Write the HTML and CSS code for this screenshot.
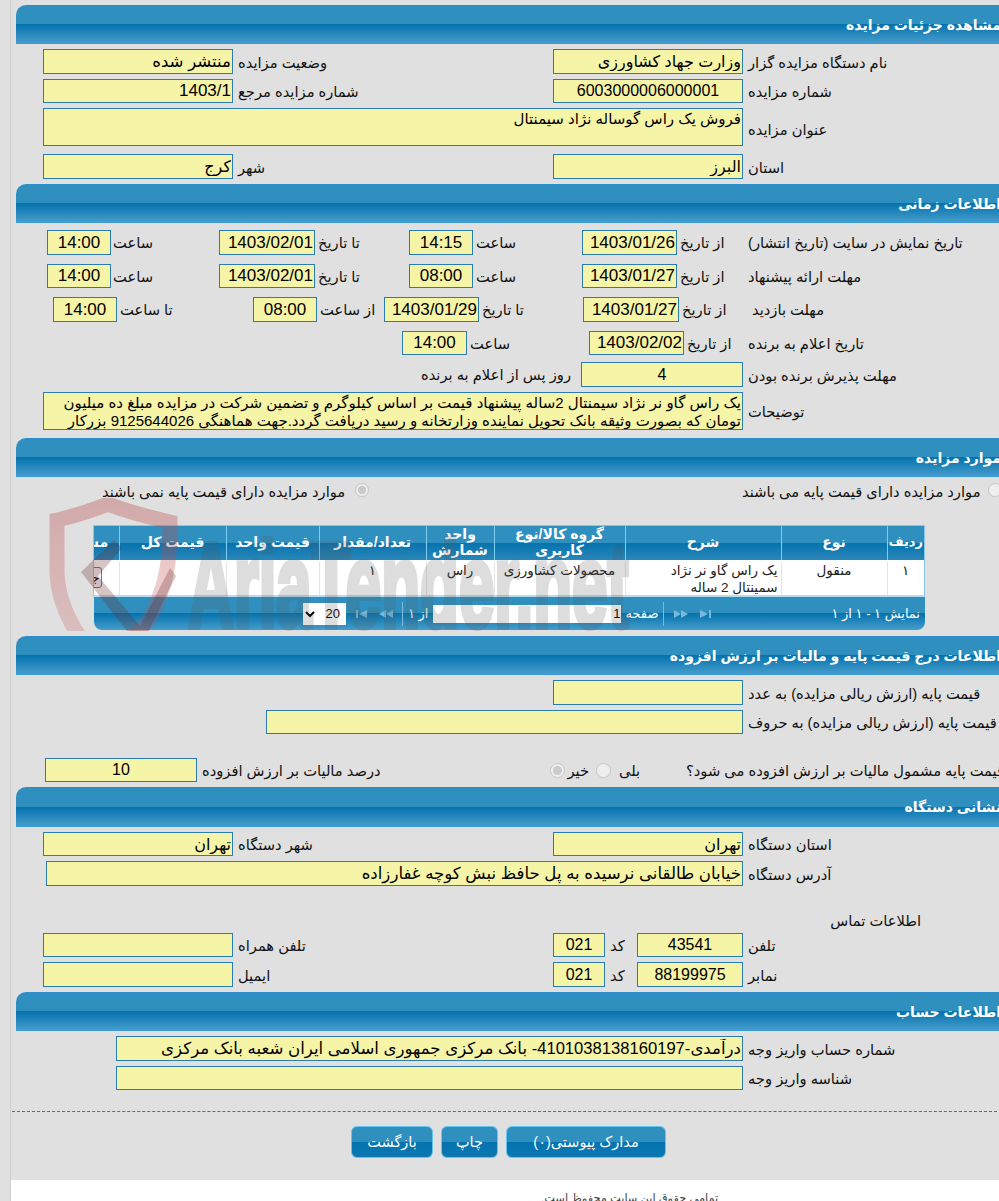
FILE: index.html
```html
<!DOCTYPE html>
<html lang="fa">
<head>
<meta charset="utf-8">
<title>مشاهده جزئیات مزایده</title>
<link rel="stylesheet" href="styles.css">
</head>
<body>
<main class="page">

<section class="section first">
  <h2 class="bar">مشاهده جزئیات مزایده</h2>
  <div class="row p27 mt5"><input class="f fa w190" readonly value="منتشر شده"><span class="l w315">وضعیت مزایده</span><input class="f w190" readonly value="وزارت جهاد کشاورزی"><span class="l">نام دستگاه مزایده گزار</span></div>
  <div class="row h24 p27 mt5"><input class="f d w190" readonly value="1403/1"><span class="l w315">شماره مزایده مرجع</span><input class="f w190 c" readonly value="6003000006000001"><span class="l">شماره مزایده</span></div>
  <div class="row h38 p27 mt5"><textarea class="f ta w700" readonly>فروش یک راس گوساله نژاد سیمنتال</textarea><span class="l low">عنوان مزایده</span></div>
  <div class="row p27 mt8"><input class="f w190" readonly value="کرج"><span class="l w315">شهر</span><input class="f w190" readonly value="البرز"><span class="l">استان</span></div>
</section>

<section class="section">
  <h2 class="bar">اطلاعات زمانی</h2>
  <div class="row p31 mt7"><input class="f d w64 c" readonly value="14:00"><span class="l2 w106">ساعت</span><input class="f d w96" readonly value="1403/02/01"><span class="l3 w91">تا تاریخ</span><input class="f d w64 c" readonly value="14:15"><span class="l3 w106">ساعت</span><input class="f d w95" readonly value="1403/01/26"><span class="l3 w68">از تاریخ</span><span class="l0">تاریخ نمایش در سایت (تاریخ انتشار)</span></div>
  <div class="row h24 p31 mt9"><input class="f d w64 c" readonly value="14:00"><span class="l2 w106">ساعت</span><input class="f d w96" readonly value="1403/02/01"><span class="l3 w91">تا تاریخ</span><input class="f d w64 c" readonly value="08:00"><span class="l3 w106">ساعت</span><input class="f d w95" readonly value="1403/01/27"><span class="l3 w68">از تاریخ</span><span class="l0">مهلت ارائه پیشنهاد</span></div>
  <div class="row p37 mt9"><input class="f d w64 c" readonly value="14:00"><span class="l3 w133">تا ساعت</span><input class="f d w64 c" readonly value="08:00"><span class="l3 w64">از ساعت</span><input class="f d w95" readonly value="1403/01/29"><span class="l3 w101">تا تاریخ</span><input class="f d w96" readonly value="1403/01/27"><span class="l3 w70">از تاریخ</span><span class="l0">مهلت بازدید</span></div>
  <div class="row h24 p386 mt9"><input class="f d w65 c" readonly value="14:00"><span class="l3 w119">ساعت</span><input class="f d w95" readonly value="1403/02/02"><span class="l3 w61">از تاریخ</span><span class="l0">تاریخ اعلام به برنده</span></div>
  <div class="row p408 mt7"><span class="tail">روز پس از اعلام به برنده</span><input class="f w162 c" readonly value="4"><span class="l">مهلت پذیرش برنده بودن</span></div>
  <div class="row h38 p27 mt5 mb3"><textarea class="f ta w700" readonly>یک راس گاو نر نژاد سیمنتال 2ساله پیشنهاد قیمت بر اساس کیلوگرم و تضمین شرکت در مزایده مبلغ ده میلیون
تومان که بصورت وثیقه بانک تحویل نماینده وزارتخانه و رسید دریافت گردد.جهت هماهنگی 9125644026 بزرکار</textarea><span class="l">توضیحات</span></div>
</section>

<section class="section s3">
  <h2 class="bar">موارد مزایده</h2>
  <div class="radios">
    <span class="rt w249">موارد مزایده دارای قیمت پایه نمی باشند</span><input class="radio ml4" type="radio" name="base" disabled checked>
    <span class="rt w242 ml373">موارد مزایده دارای قیمت پایه می باشند</span><input class="radio ml4" type="radio" name="base" disabled>
  </div>
  <div class="grid">
    <div class="grid-clip">
      <table class="tbl">
        <colgroup><col class="c37"><col class="c106"><col class="c156"><col class="c131"><col class="c68"><col class="c107"><col class="c93"><col class="c107"><col class="c76"></colgroup>
        <thead><tr><th class="th-s">ردیف</th><th>نوع</th><th>شرح</th><th>گروه کالا/نوع کاربری</th><th>واحد شمارش</th><th>تعداد/مقدار</th><th>قیمت واحد</th><th>قیمت کل</th><th>مشاهده</th></tr></thead>
        <tbody><tr><td class="tc">۱</td><td class="tc">منقول</td><td>یک راس گاو نر نژاد سمینتال 2 ساله</td><td class="tc">محصولات کشاورزی</td><td class="tc">راس</td><td class="tc">۱</td><td></td><td></td><td><button class="mini" type="button">جزئیات</button></td></tr></tbody>
      </table>
    </div>
    <div class="pager">
      <select class="pg-size" dir="rtl"><option>20</option></select>
      <svg class="pg-ico ml9" viewBox="0 0 14 12" width="14" height="12"><path d="M1 2h2v8H1zM12 2v8L4 6z"/></svg>
      <svg class="pg-ico ml9" viewBox="0 0 16 12" width="16" height="12"><path d="M8 2v8L1 6zM15 2v8L8 6z"/></svg>
      <span class="pg-sep ml8"></span>
      <span class="pg-t ml5">از ۱</span>
      <input class="pg-in" readonly value="1">
      <span class="pg-t ml5">صفحه</span>
      <span class="pg-sep ml5"></span>
      <svg class="pg-ico ml9" viewBox="0 0 16 12" width="16" height="12"><path d="M1 2v8l7-4zM8 2v8l7-4z"/></svg>
      <svg class="pg-ico ml9" viewBox="0 0 14 12" width="14" height="12"><path d="M2 2v8l8-4zM11 2h2v8h-2z"/></svg>
      <span class="pg-info">نمایش ۱ - ۱ از ۱</span>
    </div>
  </div>
  <div class="mark" aria-hidden="true">
    <svg class="mark-s" viewBox="0 0 135 150" width="135" height="150">
      <defs><linearGradient id="shade" x1="0" y1="0" x2="0" y2="1"><stop offset="0" stop-color="#b84a4a" stop-opacity=".36"/><stop offset="1" stop-color="#c85050" stop-opacity=".2"/></linearGradient></defs>
      <path d="M9 22 C35 16 50 10 60 6 C80 14 105 20 122 24 C122 60 120 85 102 120 C90 136 75 150 55 170 C30 140 10 110 9 75 Z" fill="none" stroke="url(#shade)" stroke-width="15"/>
      <path d="M33 74 L66 42 L74 50 L50 78 L92 128 L122 70 L128 78 L92 150 Z" fill="#6b2a2a" fill-opacity=".28"/>
    </svg>
    <span class="mark-t">AriaTender.net</span>
  </div>
</section>

<section class="section">
  <h2 class="bar">اطلاعات درج قیمت پایه و مالیات بر ارزش افزوده</h2>
  <div class="row p537 mt5"><input class="f w190" readonly><span class="l">قیمت پایه (ارزش ریالی مزایده) به عدد</span></div>
  <div class="row h24 p250 mt5"><input class="f w477" readonly><span class="l">قیمت پایه (ارزش ریالی مزایده) به حروف</span></div>
  <div class="row h24 p29 mt24"><input class="f w152 c" readonly value="10"><span class="l w348">درصد مالیات بر ارزش افزوده</span><input class="radio big" type="radio" name="tax" disabled checked><span class="rt ml7 w17">خیر</span><input class="radio big ml7" type="radio" name="tax" disabled><span class="rt ml8 w67">بلی</span><span class="rt">قیمت پایه مشمول مالیات بر ارزش افزوده می شود؟</span></div>
</section>

<section class="section">
  <h2 class="bar tall">نشانی دستگاه</h2>
  <div class="row h24 p27 mt5"><input class="f w190" readonly value="تهران"><span class="l w315">شهر دستگاه</span><input class="f w190" readonly value="تهران"><span class="l">استان دستگاه</span></div>
  <div class="row p30 mt5"><input class="f fa w697" readonly value="خیابان طالقانی نرسیده به پل حافظ نبش کوچه غفارزاده"><span class="l">آدرس دستگاه</span></div>
  <p class="contact">اطلاعات تماس</p>
  <div class="row h24 p27 mt3"><input class="f w190" readonly><span class="l w315">تلفن همراه</span><input class="f w52 c" readonly value="021"><span class="l w27">کد</span><input class="f w106 c" readonly value="43541"><span class="l">تلفن</span></div>
  <div class="row p27 mt5"><input class="f w190" readonly><span class="l w315">ایمیل</span><input class="f w52 c" readonly value="021"><span class="l w27">کد</span><input class="f w106 c" readonly value="88199975"><span class="l">نمابر</span></div>
</section>

<section class="section">
  <h2 class="bar">اطلاعات حساب</h2>
  <div class="row p100 mt5"><input class="f fa w627" readonly value="درآمدی-4101038138160197- بانک مرکزی جمهوری اسلامی ایران شعبه بانک مرکزی"><span class="l">شماره حساب واریز وجه</span></div>
  <div class="row h24 p100 mt5"><input class="f w627" readonly><span class="l">شناسه واریز وجه</span></div>
</section>

<hr class="dash">
<div class="actions">
  <button class="btn w82" type="button">بازگشت</button>
  <button class="btn w57" type="button">چاپ</button>
  <button class="btn w160" type="button">مدارک پیوستی(۰)</button>
</div>
<footer class="foot">تمامی حقوق این سایت محفوظ است.</footer>
</main>
</body>
</html>
```

FILE: styles.css
```css
html { overflow: hidden; background: #e0e0e0; }
body { margin: 0; background: #e0e0e0; font-family: "Liberation Sans", "DejaVu Sans", sans-serif; font-size: 14.7px; color: #111; }
.page { margin-left: 10px; border-left: 1px solid #cdcdcd; width: 1100px; height: 1201px; overflow: hidden; display: flex; flex-direction: column; }
.section { width: 990px; margin: 5px 0 0 5px; flex: none; }
.first { margin-top: 5px; }

.bar { margin: 0; height: 39px; box-sizing: border-box; padding: 0 5px 0 0; direction: rtl; display: flex; align-items: center; color: #fff; font-size: 14px; font-weight: bold; white-space: nowrap; border-radius: 10px 0 0 0; border-top: 1px solid #2d8ccb; border-bottom: 1px solid #399ade; background: linear-gradient(#2f90c0 0, #2f8fbe 49%, #0573ae 50%, #469ccb 100%); }
.tall { height: 40px; }

.row { display: flex; align-items: center; height: 25px; }
.h24 { height: 24px; }
.h38 { height: 38px; }
.mt3 { margin-top: 3px; }
.mt5 { margin-top: 5px; }
.mt7 { margin-top: 7px; }
.mt8 { margin-top: 8px; }
.mt9 { margin-top: 9px; }
.mt24 { margin-top: 24px; }
.mb3 { margin-bottom: 3px; }
.p27 { padding-left: 27px; }
.p29 { padding-left: 29px; }
.p30 { padding-left: 30px; }
.p31 { padding-left: 31px; }
.p37 { padding-left: 37px; }
.p100 { padding-left: 100px; }
.p250 { padding-left: 250px; }
.p386 { padding-left: 386px; }
.p408 { padding-left: 408px; }
.p537 { padding-left: 537px; }

.f { box-sizing: border-box; height: 100%; flex: none; margin: 0; padding: 0 1px; border: 1px solid #2a7db2; border-radius: 0; background: #f6f4a6; color: #000; font: 16px "Liberation Sans", "DejaVu Sans", sans-serif; direction: rtl; text-align: right; outline: none; }
.d { font-size: 17px; }
.fa { font-size: 16.6px; }
.c { text-align: center; }
.ta { font-size: 15px; line-height: 18px; padding-top: 1px; resize: none; overflow: hidden; white-space: pre; }

.l, .l0, .l2, .l3, .rt, .tail { flex: none; direction: rtl; text-align: left; white-space: nowrap; }
.l { margin-left: 5px; padding-top: 1px; }
.low { padding-top: 5px; }
.l0 { margin-left: 0; }
.l2 { margin-left: 2px; }
.l3 { margin-left: 3px; }
.tail { width: 147px; margin-right: 10px; text-align: right; }

.w17 { width: 17px; } .w27 { width: 27px; } .w52 { width: 52px; } .w57 { width: 57px; } .w61 { width: 61px; }
.w64 { width: 64px; } .w65 { width: 65px; } .w67 { width: 67px; } .w68 { width: 68px; } .w70 { width: 70px; }
.w82 { width: 82px; } .w91 { width: 91px; } .w95 { width: 95px; } .w96 { width: 96px; } .w101 { width: 101px; }
.w106 { width: 106px; } .w119 { width: 119px; } .w133 { width: 133px; } .w152 { width: 152px; } .w160 { width: 160px; }
.w162 { width: 162px; } .w190 { width: 190px; } .w242 { width: 242px; } .w249 { width: 249px; } .w315 { width: 315px; }
.w348 { width: 348px; } .w477 { width: 477px; } .w627 { width: 627px; } .w697 { width: 697px; } .w700 { width: 700px; }

.s3 { position: relative; overflow: hidden; padding-bottom: 1px; }
.radios { display: flex; align-items: flex-start; height: 14px; margin-top: 6px; padding-left: 86px; }
.radios .rt { line-height: 18px; }
.radio { flex: none; width: 14px; height: 14px; margin: 0; }
.big { width: 15px; height: 15px; }
.ml4 { margin-left: 4px; }
.ml5 { margin-left: 5px; }
.ml7 { margin-left: 7px; }
.ml8 { margin-left: 8px; }
.ml9 { margin-left: 9px; }
.ml373 { margin-left: 373px; }

.grid { margin: 28px 0 0 77px; width: 832px; height: 105px; position: relative; }
.grid-clip { height: 72px; overflow: hidden; direction: rtl; box-sizing: border-box; border: 1px solid #86c6e6; border-bottom: 2px solid #b5dcf0; background: #fff; }
.tbl { table-layout: fixed; border-collapse: collapse; width: 881px; }
.c37 { width: 37px; } .c106 { width: 106px; } .c156 { width: 156px; } .c131 { width: 131px; } .c68 { width: 68px; } .c107 { width: 107px; } .c93 { width: 93px; } .c76 { width: 76px; }
.tbl th { height: 32px; padding: 0 3px 2px; border-left: 1px solid #7ccdf2; color: #fff; font-size: 14px; line-height: 16px; font-weight: bold; background: linear-gradient(#2f90c0 0, #2f8fbe 49%, #0573ae 50%, #2a86b8 100%); }
.tbl .th-s { padding: 0 0 2px; font-size: 13px; }
.tbl td { padding: 0 3px; height: 35px; vertical-align: top; font-size: 13.5px; line-height: 17px; border-left: 1px solid #e4e4e4; border-top: 2px solid #fff; color: #222; }
.tc { text-align: center; }
.mini { height: 21px; padding: 0 1px; margin: 5px 14px 0 0; font: 13px "Liberation Sans", "DejaVu Sans", sans-serif; background: #f6f6f6; border: 1px solid #777; border-radius: 3px; white-space: nowrap; }

.pager { height: 33px; margin-left: 1px; display: flex; align-items: center; padding-left: 209px; border-radius: 0 0 8px 8px; background: linear-gradient(#2f90c0 0, #2f8fbe 49%, #0573ae 50%, #469ccb 100%); color: #fff; font-size: 13px; direction: ltr; }
.pg-size { flex: none; width: 43px; height: 22px; border: 0; border-radius: 0; background: #fff; color: #000; font: 13px "Liberation Sans", sans-serif; padding: 0 2px; }
.pg-ico { flex: none; fill: #76b9dc; }
.pg-sep { flex: none; width: 1px; height: 24px; background: #7db9d8; }
.pg-t { flex: none; direction: rtl; white-space: nowrap; }
.pg-in { flex: none; box-sizing: border-box; width: 188px; height: 18px; margin-left: 4px; padding: 0; border: 0; background: #fff; color: #000; text-align: right; direction: rtl; font: 13px "Liberation Sans", sans-serif; }
.pg-info { flex: none; margin-left: auto; padding-right: 5px; direction: rtl; white-space: nowrap; }

.mark { position: absolute; left: 0; top: 0; width: 700px; height: 198px; z-index: 5; pointer-events: none; }
.mark-s { position: absolute; left: 32px; top: 60px; }
.mark-t { position: absolute; left: 172px; top: 87px; font: bold 120px/1 "Liberation Sans", sans-serif; color: #5a5a5a; -webkit-text-stroke: 6px #5a5a5a; opacity: .2; transform: scaleX(.53); transform-origin: left top; white-space: nowrap; }

.contact { margin: 26px 0 0 815px; height: 18px; line-height: 18px; direction: rtl; white-space: nowrap; width: 90px; }

.dash { flex: none; width: 990px; margin: 21px 0 0 1px; height: 0; border: 0; border-top: 1px dashed #2a7ba8; }
.actions { flex: none; display: flex; gap: 8px; padding-left: 340px; margin-top: 14px; }
.btn { flex: none; height: 32px; padding: 0; color: #fff; font: 14.5px "Liberation Sans", "DejaVu Sans", sans-serif; direction: rtl; border: 1px solid #66c4ee; border-radius: 6px; background: linear-gradient(#2f90c0 0, #2f8fbe 49%, #0573ae 50%, #0b78b2 100%); }
.foot { flex: 1; margin-top: 22px; padding: 11px 0 0 530px; background: #fff; direction: rtl; text-align: left; font-size: 11.4px; color: #444; white-space: nowrap; }
```
